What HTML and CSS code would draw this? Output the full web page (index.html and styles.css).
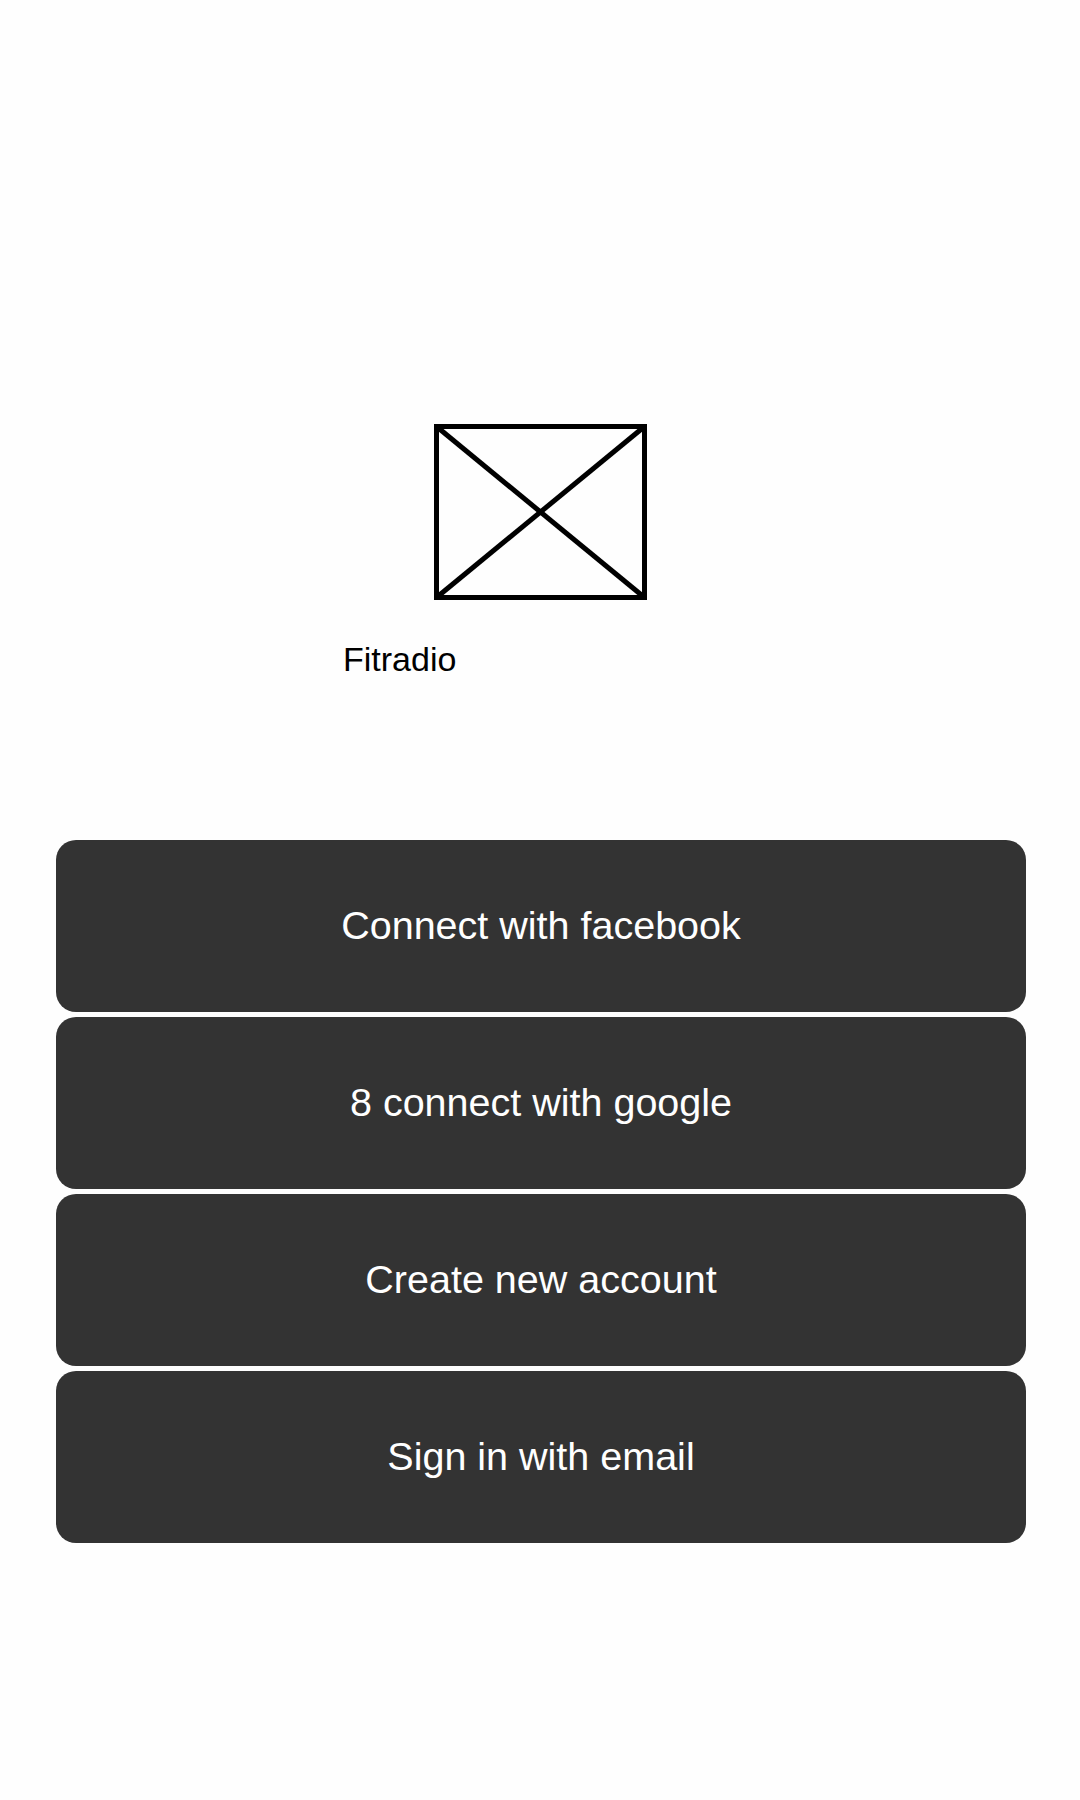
FILE: index.html
```html
<!DOCTYPE html>
<html lang="en">
<head>
<meta charset="utf-8">
<title>Fitradio</title>
<link rel="stylesheet" href="styles.css">
</head>
<body>
<main class="screen">
  <div class="logo-wrap">
    <svg class="logo" width="213" height="176" viewBox="0 0 213 176" aria-hidden="true">
      <rect x="2.5" y="2.5" width="208" height="171" fill="none" stroke="#000" stroke-width="5"/>
      <line x1="2.5" y1="2.5" x2="210.5" y2="173.5" stroke="#000" stroke-width="5"/>
      <line x1="210.5" y1="2.5" x2="2.5" y2="173.5" stroke="#000" stroke-width="5"/>
    </svg>
  </div>
  <div class="title">Fitradio</div>
  <div class="actions">
    <button class="btn">Connect with facebook</button>
    <button class="btn">8 connect with google</button>
    <button class="btn">Create new account</button>
    <button class="btn">Sign in with email</button>
  </div>
</main>
</body>
</html>
```
FILE: styles.css
```css
html, body {
  margin: 0;
  padding: 0;
  background: #fefefe;
}
body {
  font-family: "Liberation Sans", Arial, sans-serif;
  color: #000;
}
.screen {
  width: 1080px;
  min-height: 1800px;
  padding-top: 424px;
  box-sizing: border-box;
}
.logo-wrap {
  display: flex;
  justify-content: center;
  padding-left: 1px;
}
.logo {
  display: block;
}
.title {
  margin-top: 39px;
  padding-left: 343px;
  font-size: 34px;
  line-height: 40px;
}
.actions {
  margin-top: 161px;
  padding: 0 54px 0 56px;
  display: flex;
  flex-direction: column;
  gap: 5.5px;
}
.btn {
  height: 171.5px;
  border: none;
  border-radius: 20px;
  background: #333333;
  color: #fff;
  font-family: "Liberation Sans", Arial, sans-serif;
  font-size: 39.5px;
  padding: 0;
  cursor: pointer;
}
```
